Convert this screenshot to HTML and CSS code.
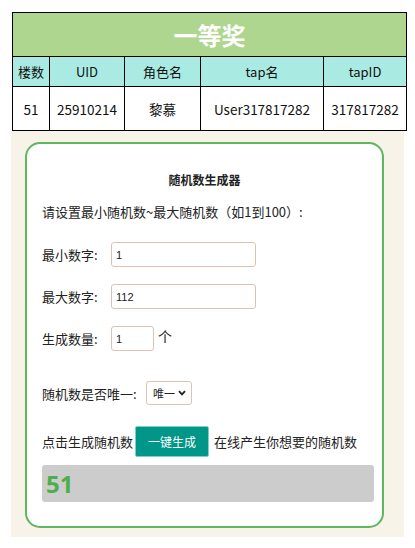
FILE: index.html
```html
<!DOCTYPE html>
<html lang="zh">
<head>
<meta charset="utf-8">
<link rel="stylesheet" href="styles.css">
</head>
<body>
<div class="page">
  <table class="prize">
    <colgroup>
      <col class="c1"><col class="c2"><col class="c3"><col class="c4"><col class="c5">
    </colgroup>
    <tr><th class="title" colspan="5">一等奖</th></tr>
    <tr class="head"><td>楼数</td><td>UID</td><td>角色名</td><td>tap名</td><td>tapID</td></tr>
    <tr class="data"><td>51</td><td>25910214</td><td>黎慕</td><td>User317817282</td><td>317817282</td></tr>
  </table>
  <div class="bg">
    <div class="card">
      <div class="card-title">随机数生成器</div>
      <div class="hint">请设置最小随机数~最大随机数（如1到100）:</div>
      <div class="row r1"><span class="label">最小数字:</span><input class="inp" value="1"></div>
      <div class="row r2"><span class="label">最大数字:</span><input class="inp" value="112"></div>
      <div class="row r3"><span class="label">生成数量:</span><input class="inp small" value="1"><span class="unit">个</span></div>
      <div class="row r4"><span class="label">随机数是否唯一:</span>
        <span class="sel"><select><option>唯一</option></select>
          <svg class="chev" width="8" height="6" viewBox="0 0 8 6"><path d="M1 1.2 L4 4.4 L7 1.2" fill="none" stroke="#222" stroke-width="1.8"/></svg>
        </span>
      </div>
      <div class="row r5"><span>点击生成随机数</span><button class="btn">一键生成</button><span>在线产生你想要的随机数</span></div>
      <div class="result">51</div>
    </div>
  </div>
</div>
</body>
</html>
```
FILE: styles.css
```css
html, body { margin: 0; padding: 0; background: #fff; }
body { font-family: "Noto Sans CJK SC", "Noto Sans", sans-serif; color: #222; }
.page { padding: 12px 0 0 12px; width: 394px; }
.prize { border-collapse: collapse; width: 394px; table-layout: fixed; }
.prize col.c1 { width: 37px; }
.prize col.c2 { width: 75px; }
.prize col.c3 { width: 76px; }
.prize col.c4 { width: 123px; }
.prize col.c5 { width: 83px; }
.prize th, .prize td { border: 1px solid #000; padding: 0; text-align: center; font-size: 13px; color: #111; }
.prize .title { background: #aed68e; color: #fff; font-size: 24px; font-weight: bold; height: 43px; }
.prize .head td { background: #a9ebe3; height: 29px; }
.prize .data td { height: 43px; font-size: 13.5px; }
.bg { margin-left: -1px; width: 393px; background: #f7f3e8; padding: 11px 0 9px 0; }
.card { margin-left: 14px; width: 355px; border: 2px solid #5cb85c; border-radius: 15px; background: #fff; padding: 26px 0 24px 15px; box-sizing: border-box; width: 359px; }
.card-title { text-align: center; font-weight: bold; font-size: 12px; line-height: 20px; padding-right: 15px; }
.hint { font-size: 13px; line-height: 20px; margin-top: 12px; }
.row { display: flex; align-items: center; font-size: 13px; }
.label { width: 69px; }
.r1 { margin-top: 20px; }
.r2, .r3 { margin-top: 17px; }
.r4 { margin-top: 30px; }
.r4 .label { width: 104px; }
.r5 { margin-top: 21px; }
.inp { width: 145px; height: 25px; box-sizing: border-box; border: 1px solid #dcc3b3; border-radius: 3px; font-size: 11px; padding: 0 4px; font-family: "Liberation Sans", sans-serif; color: #222; outline: none; }
.inp.small { width: 43px; }
.unit { margin-left: 4px; font-size: 14px; margin-top: -6px; }
.sel { position: relative; display: inline-block; }
.sel select { appearance: none; -webkit-appearance: none; width: 46px; height: 24px; border: 1px solid #dcc3b3; border-radius: 3px; background: #fff; font-size: 11px; padding: 0 0 0 6px; font-family: "Noto Sans CJK SC", sans-serif; color: #222; }
.chev { position: absolute; right: 6px; top: 9px; }
.btn { background: #009688; color: #fff; border: 1px solid #7fd0c6; width: 74px; height: 31px; font-size: 12px; margin: 0 5px 0 2px; font-family: "Noto Sans CJK SC", sans-serif; border-radius: 2px; padding: 0; }
.result { margin-top: 8px; width: 332px; height: 37px; background: #cccccc; border-radius: 3px; color: #4cae4c; font-weight: bold; font-size: 24px; line-height: 37px; padding-left: 4px; box-sizing: border-box; font-family: "Noto Sans", sans-serif; }
```
